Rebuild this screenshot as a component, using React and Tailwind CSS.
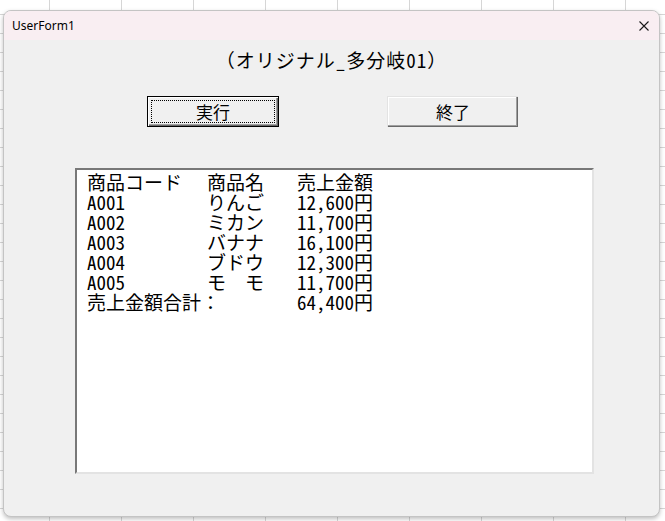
import React from "react";

const rows = [
  { code: "A001", name: "りんご", amount: "12,600円" },
  { code: "A002", name: "ミカン", amount: "11,700円" },
  { code: "A003", name: "バナナ", amount: "16,100円" },
  { code: "A004", name: "ブドウ", amount: "12,300円" },
  { code: "A005", name: "モ　モ", amount: "11,700円" },
];

const gothic = "font-['Noto_Sans_Mono_CJK_JP','Noto_Sans_CJK_JP',sans-serif]";

export default function App() {
  return (
    <div className="w-[665px] h-[521px] overflow-hidden bg-white bg-[linear-gradient(to_right,#d6d6d6_1px,transparent_1px),linear-gradient(to_bottom,#d6d6d6_1px,transparent_1px)] bg-[size:72px_19px] bg-[position:49px_14px] pt-[10px] pl-[3px]">
      <div className="w-[657px] h-[507px] rounded-[8px] border border-[#c4c4c4] bg-[#f0f0f0] overflow-hidden flex flex-col shadow-[0_2px_4px_rgba(0,0,0,0.25)]">
        {/* title bar */}
        <div className="h-[29px] bg-[#f9eef2] flex items-center justify-between pl-[8px] pr-[10px] font-['Noto_Sans',sans-serif] text-[12px] text-black">
          <span>UserForm1</span>
          <svg width="10" height="10" viewBox="0 0 10 10" className="text-[#1a1a1a]">
            <path d="M0.5 0.5 L9.5 9.5 M9.5 0.5 L0.5 9.5" stroke="currentColor" strokeWidth="1.1" fill="none" />
          </svg>
        </div>

        {/* label */}
        <div className={`h-[40px] flex items-center justify-center text-[19px] tracking-[1px] font-light text-black ${gothic}`}>
          （オリジナル_多分岐01）
        </div>

        {/* buttons */}
        <div className="mt-[16px] flex pl-[143px] gap-[108px]">
          <button className={`w-[132px] h-[31px] border border-black bg-[#f0f0f0] p-[3px] shadow-[inset_1px_1px_#ffffff,inset_-1px_-1px_#696969,inset_-2px_-2px_#a0a0a0] text-[17px] font-light text-black ${gothic}`}>
            <span className="flex h-full w-full items-center justify-center border border-dotted border-black">
              実行
            </span>
          </button>
          <button className={`w-[131px] h-[31px] bg-[#f0f0f0] flex items-center justify-center shadow-[inset_-1px_-1px_#696969,inset_-2px_-2px_#a0a0a0,inset_1px_1px_#ffffff] border-t border-l border-[#e3e3e3] border-r-0 border-b-0 text-[17px] font-light text-black ${gothic}`}>
            終了
          </button>
        </div>

        {/* list box */}
        <div className="mt-[41px] ml-[71px] w-[519px] h-[306px] bg-white border-2 border-t-[#787878] border-l-[#787878] border-r-[#e3e3e3] border-b-[#e3e3e3] pl-[10px] pt-[2px]">
          <div className={`grid grid-cols-[120px_90px_1fr] text-[19px] leading-[20px] font-light text-black ${gothic}`}>
            <span>商品コード</span>
            <span>商品名</span>
            <span>売上金額</span>
            {rows.map((r) => (
              <React.Fragment key={r.code}>
                <span>{r.code}</span>
                <span>{r.name}</span>
                <span>{r.amount}</span>
              </React.Fragment>
            ))}
            <span className="col-span-2">売上金額合計：</span>
            <span>64,400円</span>
          </div>
        </div>
      </div>
    </div>
  );
}
